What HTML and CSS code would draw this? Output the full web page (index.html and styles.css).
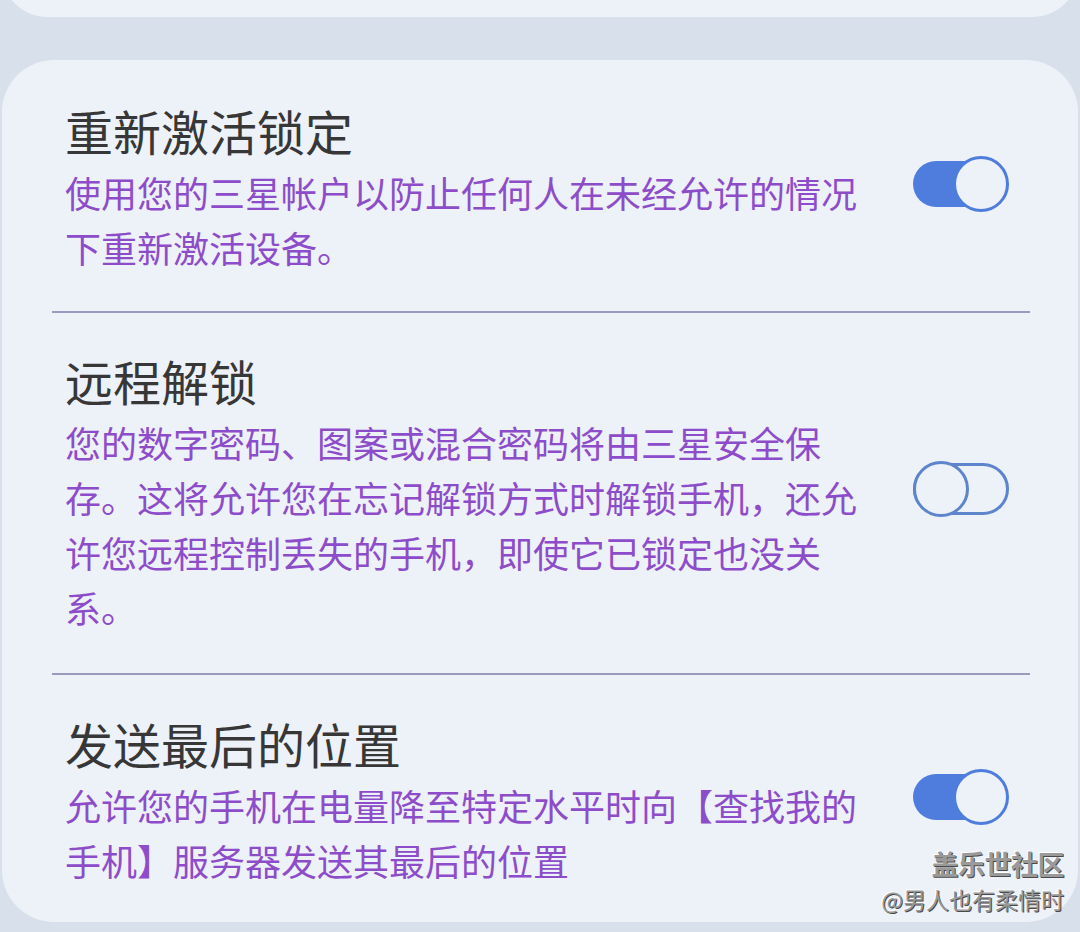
FILE: index.html
```html
<!DOCTYPE html>
<html lang="zh-CN">
<head>
<meta charset="utf-8">
<title>设置</title>
<link rel="stylesheet" href="styles.css">
</head>
<body>
<div class="card card-top"></div>
<div class="card card-main">
  <div class="row row-first">
    <div class="text">
      <div class="title">重新激活锁定</div>
      <div class="desc">使用您的三星帐户以防止任何人在未经允许的情况下重新激活设备。</div>
    </div>
    <div class="switch on"><span class="track"></span><span class="thumb"></span></div>
  </div>
  <div class="divider"></div>
  <div class="row row-mid">
    <div class="text">
      <div class="title">远程解锁</div>
      <div class="desc">您的数字密码、图案或混合密码将由三星安全保存。这将允许您在忘记解锁方式时解锁手机，还允许您远程控制丢失的手机，即使它已锁定也没关系。</div>
    </div>
    <div class="switch off"><span class="track"></span><span class="thumb"></span></div>
  </div>
  <div class="divider"></div>
  <div class="row row-last">
    <div class="text">
      <div class="title">发送最后的位置</div>
      <div class="desc">允许您的手机在电量降至特定水平时向【查找我的手机】服务器发送其最后的位置</div>
    </div>
    <div class="switch on"><span class="track"></span><span class="thumb"></span></div>
  </div>
  <div class="watermark">
    <div class="wm-1">盖乐世社区</div>
    <div class="wm-2">@男人也有柔情时</div>
  </div>
</div>
</body>
</html>
```

FILE: styles.css
```css
html, body {
  margin: 0;
  padding: 0;
}
body {
  background: #d8e0eb;
  width: 1080px;
  height: 932px;
  overflow: hidden;
  font-family: "Noto Sans CJK SC", "Noto Sans", sans-serif;
}
.card {
  background: #edf1f8;
  margin: 0 2px;
  border-radius: 52px;
}
.card-top {
  height: 90px;
  margin-top: -73px;
}
.card-main {
  position: relative;
  margin-top: 43px;
  padding: 4px 0 0;
  height: 862px;
  box-sizing: border-box;
}
.row {
  display: flex;
  align-items: center;
  padding: 35px 0 34px 63px;
}
.row-first {
  padding-top: 34px;
  padding-bottom: 36px;
}
.row-mid {
  padding-bottom: 38px;
}
.row-last {
  padding-top: 36px;
}
.text {
  width: 810px;
  flex: none;
}
.title {
  font-size: 48px;
  line-height: 64px;
  color: #373737;
}
.desc {
  margin-top: 3px;
  font-size: 36px;
  line-height: 55px;
  color: #8d4dca;
}
.divider {
  height: 2px;
  background: #9a9abd;
  margin: 0 48px 0 50px;
}
.switch {
  position: relative;
  flex: none;
  width: 96px;
  height: 56px;
  margin-left: 38px;
  margin-bottom: 6px;
}
.switch .track,
.switch .thumb {
  position: absolute;
  box-sizing: border-box;
}
.switch.on .track {
  left: 0;
  top: 5px;
  width: 80px;
  height: 46px;
  border-radius: 23px;
  background: #4f7ddd;
}
.switch.on .thumb {
  right: 0;
  top: 0;
  width: 56px;
  height: 56px;
  border-radius: 50%;
  background: #edf1f8;
  border: 3px solid #4f7ddd;
}
.switch.off .track {
  left: 0;
  top: 2px;
  width: 96px;
  height: 52px;
  border-radius: 26px;
  border: 3px solid #5e84cc;
}
.switch.off .thumb {
  left: 0;
  top: 0;
  width: 56px;
  height: 56px;
  border-radius: 50%;
  background: #edf1f8;
  border: 3px solid #5e84cc;
}
.watermark {
  position: absolute;
  right: 14px;
  bottom: 6px;
  text-align: right;
  color: #9a9a9a;
  text-shadow: 1px 1px 0 #4a4a4a, -1px -1px 0 #ffffff;
}
.wm-1 {
  font-size: 27px;
  line-height: 36px;
  font-weight: 700;
  letter-spacing: -0.5px;
}
.wm-2 {
  font-size: 23px;
  line-height: 34px;
}
```
